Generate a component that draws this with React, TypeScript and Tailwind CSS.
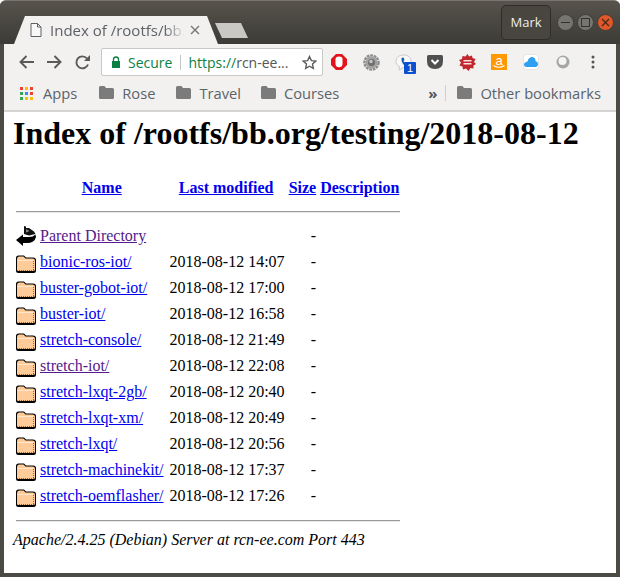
import React from 'react';

const uiFont = "font-['Open_Sans','Noto_Sans',sans-serif]";

const rows = [
  { name: 'bionic-ros-iot/', date: '2018-08-12 14:07' },
  { name: 'buster-gobot-iot/', date: '2018-08-12 17:00' },
  { name: 'buster-iot/', date: '2018-08-12 16:58' },
  { name: 'stretch-console/', date: '2018-08-12 21:49' },
  { name: 'stretch-iot/', date: '2018-08-12 22:08', visited: true },
  { name: 'stretch-lxqt-2gb/', date: '2018-08-12 20:40' },
  { name: 'stretch-lxqt-xm/', date: '2018-08-12 20:49' },
  { name: 'stretch-lxqt/', date: '2018-08-12 20:56' },
  { name: 'stretch-machinekit/', date: '2018-08-12 17:37' },
  { name: 'stretch-oemflasher/', date: '2018-08-12 17:26' },
];

function FolderIcon() {
  return (
    <svg width="20" height="22" viewBox="0 -1 20 22" className="block">
      <path d="M0 6 Q0 3.500 2.500 3.500 H8 L10 5.500 H17 Q20 5.500 20 8 V18.500 Q20 21 17.500 21 H2.500 Q0 21 0 18.500 Z" fill="#000" />
      <path d="M1 7 Q1 4.500 3 4.500 H7.500 L9.500 6.500 H16.500 Q19 6.500 19 8.500 V17.500 Q19 19 17.500 19 H2.500 Q1 19 1 17.500 Z" fill="#ffcc99" />
      <path d="M2 8.500 H17" stroke="#ffe6cc" strokeWidth="1" />
      <path d="M17.500 9 V18" stroke="#8a6a40" strokeWidth="1" strokeDasharray="1 1" />
      <path d="M3 18.500 H18" stroke="#8a6a40" strokeWidth="1" strokeDasharray="1 1" />
    </svg>
  );
}

function BackIcon() {
  return (
    <svg width="20" height="22" viewBox="0 0 20 22" className="block">
      {/* top of the ribbon */}
      <path d="M8 1 L10 1.500 V3 L13 3 L18 6.500 L19.500 9 L13 10.500 L8 9 Z" fill="#111" />
      <path d="M10 4 L13.500 6 L10 7.500 Z" fill="#8a8a8a" />
      {/* arrow */}
      <path d="M0 15 L7 9.500 V12 H13 Q17 12 19.500 9.500 L20 12 Q18.500 18 11 18 H7 V21 Z" fill="#000" />
    </svg>
  );
}

function BookmarkFolder() {
  return (
    <svg width="15" height="13" viewBox="0 0 15 13" className="shrink-0">
      <path d="M0 1.500 Q0 0 1.500 0 H5.500 L7 2 H13.500 Q15 2 15 3.500 V11.500 Q15 13 13.500 13 H1.500 Q0 13 0 11.500 Z" fill="#7b7b7b" />
    </svg>
  );
}

function AppsIcon() {
  const colors = ['#ea4335', '#fbbc05', '#ea4335', '#34a853', '#4285f4', '#ea4335', '#34a853', '#fbbc05', '#fbbc05'];
  return (
    <div className="grid grid-cols-3 gap-[2px] w-[13px] shrink-0">
      {colors.map((c, i) => (
        <svg key={i} width="3" height="3" className="block">
          <rect width="3" height="3" fill={c} />
        </svg>
      ))}
    </div>
  );
}

function Bookmark({ label, className }: { label: string; className: string }) {
  return (
    <div className={`flex items-center gap-2 ${className}`}>
      <BookmarkFolder />
      <span>{label}</span>
    </div>
  );
}

function ExtensionIcons() {
  return (
    <div className="flex items-center h-full">
      <div className="w-8 flex justify-center">
        <svg width="16" height="16" viewBox="0 0 16 16">
          <path d="M5 0 H11 L16 5 V11 L11 16 H5 L0 11 V5 Z" fill="#e2131b" />
          <path d="M4.500 5 Q4.500 2.500 8 2.500 Q11.500 2.500 11.500 5 V10 Q11.500 13 8 13.200 Q4.500 13 4.500 10 Z" fill="#fff" />
        </svg>
      </div>
      <div className="w-8 flex justify-center">
        <svg width="17" height="17" viewBox="0 0 17 17">
          <circle cx="8.500" cy="8.500" r="7" fill="none" stroke="#8c8c8c" strokeWidth="2.500" strokeDasharray="2.700 .8" />
          <circle cx="8.500" cy="8.500" r="6" fill="#a2a2a2" />
          <circle cx="8.500" cy="8.500" r="3.500" fill="#6e6e6e" />
          <circle cx="8" cy="7.500" r="1.800" fill="#c4c4c4" />
        </svg>
      </div>
      <div className="w-8 flex justify-center relative">
        <svg width="17" height="17" viewBox="0 0 17 17">
          <path d="M8.500 1 C13 1 16 3.500 16 7.500 C16 11 13 13.500 8.500 13.500 L4 16 L4.500 12.500 C2 11.500 1 9.500 1 7.500 C1 3.500 4 1 8.500 1 Z" fill="#f8f8f8" stroke="#c9c9c9" />
          <path d="M6.500 4 L8.500 3.500 L9.500 6 L8.500 7 Q9 8.500 10.500 9.500 L11.500 8.500 L14 10 L13 12 Q10 12.500 8 10 Q6 7.500 6.500 4 Z" fill="#1558b0" />
        </svg>
        <span className="absolute left-[17px] top-[8px] w-3 h-3 bg-[#0b50d0] rounded-[1px] text-white text-[11px] leading-3 text-center font-['Liberation_Sans',sans-serif]">
          1
        </span>
      </div>
      <div className="w-8 flex justify-center">
        <svg width="16" height="14" viewBox="0 0 16 14">
          <path d="M0 1.500 Q0 0 1.500 0 H14.500 Q16 0 16 1.500 V6 Q16 14 8 14 Q0 14 0 6 Z" fill="#505050" />
          <path d="M4.500 5 L8 8.500 L11.500 5" fill="none" stroke="#fff" strokeWidth="2" />
        </svg>
      </div>
      <div className="w-8 flex justify-center">
        <svg width="17" height="17" viewBox="0 0 17 17">
          <path d="M8.500 0 L10 2.500 L13 1.500 L13.500 4 L16.500 5 L15 8 L17 10 L14.500 11.500 L14.500 14.500 L11.500 14 L9.500 17 L7 14.500 L4 15.500 L3.500 12.500 L0.500 11.500 L2 8.500 L0 6 L3 5 L3.500 2 L6.500 2.500 Z" fill="#c2272d" />
          <rect x="4.500" y="6" width="8" height="1.500" fill="#fbe3e3" />
          <rect x="4.500" y="9" width="8" height="1.500" fill="#fbe3e3" />
        </svg>
      </div>
      <div className="w-8 flex justify-center">
        <div className="w-4 h-4 bg-[#ff9900] flex items-start justify-center relative">
          <span className="text-white text-[13px] leading-[13px] font-['Liberation_Sans',sans-serif]">a</span>
          <svg width="12" height="4" viewBox="0 0 12 4" className="absolute left-[2px] bottom-[1px]">
            <path d="M0.500 0.500 Q6 4 11.500 0.500" fill="none" stroke="#fff" strokeWidth="1.200" />
          </svg>
        </div>
      </div>
      <div className="w-8 flex justify-center">
        <div className="w-4 h-4 bg-white border border-[#e6e6e6] rounded-[3px] flex items-center justify-center">
          <svg width="14" height="10" viewBox="0 0 14 10">
            <path d="M3 10 Q0 10 0 7.500 Q0 5.500 2 5 Q3 4.500 3.500 4.500 Q4.500 0 8.500 0 Q11.500 0.500 11.500 4 Q14 4.500 14 7 Q14 10 11 10 Z" fill="#2f9ff0" />
          </svg>
        </div>
      </div>
      <div className="w-8 flex justify-center">
        <svg width="14" height="14" viewBox="0 0 14 14">
          <circle cx="7" cy="7" r="6.500" fill="#a6a6a6" />
          <circle cx="6.500" cy="6" r="4" fill="#f4f4f4" />
        </svg>
      </div>
      <div className="w-[28px] flex justify-center">
        <svg width="4" height="14" viewBox="0 0 4 14">
          <circle cx="2" cy="2" r="1.500" fill="#555" />
          <circle cx="2" cy="7" r="1.500" fill="#555" />
          <circle cx="2" cy="12" r="1.500" fill="#555" />
        </svg>
      </div>
    </div>
  );
}

export default function App() {
  return (
    <div className="w-[620px] h-[577px] bg-[#4b4a45] rounded-t-[6px] overflow-hidden flex flex-col px-1 pb-1 border-t border-[#77756e]">
      {/* tab strip */}
      <div className={`-mx-1 h-[43px] shrink-0 bg-gradient-to-b from-[#57534c] to-[#3c3b37] flex items-end pl-[14px] pr-[6px] ${uiFont}`}>
        <div className="w-[204px] h-7 bg-[#f2f1f0] [clip-path:polygon(11px_0,193px_0,204px_100%,0_100%)] flex items-center pl-[16px] text-[#5e6267] text-[15px]">
          <svg width="12" height="14" viewBox="0 0 12 14" className="shrink-0">
            <path d="M1 .5 H7.500 L11 4 V13.500 H1 Z M7.500 .5 V4 H11" fill="#f8f8f8" stroke="#5e6267" />
          </svg>
          <span className="ml-2 w-[135px] whitespace-nowrap [mask-image:linear-gradient(to_right,#000_85%,transparent)]">
            Index of /rootfs/bb.
          </span>
          <svg width="10" height="10" viewBox="0 0 10 10" className="ml-[5px] shrink-0">
            <path d="M1 1 L9 9 M9 1 L1 9" stroke="#777" strokeWidth="1.400" />
          </svg>
        </div>
        <div className="w-[33px] h-[15px] mb-[6px] -ml-[3px] bg-[#c9c8c5] [clip-path:polygon(0_0,26px_0,33px_100%,7px_100%)]" />
        <div className="ml-auto self-start mt-[4px] flex items-center gap-[6px]">
          <div className="w-[50px] h-[35px] border border-[#2e2d2a] rounded-[5px] flex items-center justify-center text-[#eeeeec] text-[13px] bg-[#48463f]">
            Mark
          </div>
          <div className="flex items-center gap-[3px]">
            <div className="w-[17px] h-[17px] rounded-full bg-[#77756f] border border-[#3e3d39] flex items-center justify-center">
              <div className="w-[9px] h-px bg-[#33322e]" />
            </div>
            <div className="w-[17px] h-[17px] rounded-full bg-[#77756f] border border-[#3e3d39] flex items-center justify-center">
              <div className="w-[9px] h-[9px] border border-[#33322e]" />
            </div>
            <div className="w-[17px] h-[17px] rounded-full bg-[#e0572a] border border-[#3e3d39] flex items-center justify-center">
              <svg width="9" height="9" viewBox="0 0 9 9">
                <path d="M1 1 L8 8 M8 1 L1 8" stroke="#4a2a1a" strokeWidth="1.400" />
              </svg>
            </div>
          </div>
        </div>
      </div>

      {/* toolbar */}
      <div className={`h-[34px] shrink-0 bg-[#f2f1f0] flex items-center pl-[15px] pt-[2px] ${uiFont}`}>
        <div className="flex items-center gap-[13px]">
          <svg width="15" height="14" viewBox="0 0 15 14">
            <path d="M15 7 H2 M7.500 1 L1.500 7 L7.500 13" fill="none" stroke="#5a5a5a" strokeWidth="1.900" />
          </svg>
          <svg width="15" height="14" viewBox="0 0 15 14">
            <path d="M0 7 H13 M7.500 1 L13.500 7 L7.500 13" fill="none" stroke="#5a5a5a" strokeWidth="1.900" />
          </svg>
          <svg width="15" height="15" viewBox="0 0 15 15">
            <path d="M13 9.500 A6 6 0 1 1 12 3.500" fill="none" stroke="#5a5a5a" strokeWidth="1.900" />
            <path d="M9 6 H15 V0 Z" fill="#5a5a5a" />
          </svg>
        </div>
        <div className="ml-[11px] w-[222px] h-7 bg-white border border-[#c8c8c8] rounded-[2px] flex items-center pl-[9px] text-[14px] whitespace-nowrap shrink-0">
          <svg width="10" height="12" viewBox="0 0 10 12" className="shrink-0">
            <path d="M2.500 5 V3.500 A2.500 2.500 0 0 1 7.500 3.500 V5" fill="none" stroke="#0b8043" strokeWidth="1.300" />
            <rect x="1" y="5" width="8" height="7" fill="#0b8043" />
          </svg>
          <span className="ml-[7px] text-[#0b8043]">Secure</span>
          <div className="w-px h-[15px] bg-[#c4c4c4] ml-2" />
          <span className="ml-[7px] text-[#0b8043]">https://</span>
          <span className="text-[#555]">rcn-ee...</span>
          <svg width="15" height="15" viewBox="0 0 24 24" className="ml-auto mr-[5px] shrink-0">
            <path d="M12 2.500 L15 9 L22 9.800 L16.800 14.500 L18.200 21.500 L12 18 L5.800 21.500 L7.200 14.500 L2 9.800 L9 9 Z" fill="none" stroke="#5a5a5a" strokeWidth="2.200" />
          </svg>
        </div>
        <ExtensionIcons />
      </div>

      {/* bookmarks bar */}
      <div className={`h-[34px] shrink-0 bg-[#f2f1f0] border-b-2 border-[#d4d4d2] flex items-center pl-[16px] pb-[2px] text-[14.700px] text-[#5b636b] ${uiFont}`}>
        <AppsIcon />
        <span className="ml-[10px]">Apps</span>
        <Bookmark label="Rose" className="ml-[22px]" />
        <Bookmark label="Travel" className="ml-[21px]" />
        <Bookmark label="Courses" className="ml-5" />
        <span className="ml-auto text-[15px] text-[#555] font-bold">»</span>
        <div className="w-px h-4 bg-[#cfcfcf] ml-[8px]" />
        <Bookmark label="Other bookmarks" className="ml-[11px] mr-[15px]" />
      </div>

      {/* page */}
      <div className="flex-1 min-h-0 bg-white overflow-hidden pl-[9px] font-['Liberation_Serif',serif] text-[16px] leading-[18px] text-black">
        <h1 className="mt-[3px] text-[32px] leading-[37px] font-bold">Index of /rootfs/bb.org/testing/2018-08-12</h1>
        <table className="mt-6 border-separate border-spacing-[2px]">
          <tbody>
            <tr>
              <th className="p-px" />
              <th className="p-px pr-[3px] text-center font-bold">
                <a className="text-[#0000ee] underline">Name</a>
              </th>
              <th className="p-px pr-[3px] text-center font-bold">
                <a className="text-[#0000ee] underline">Last modified</a>
              </th>
              <th className="p-px text-center font-bold">
                <a className="text-[#0000ee] underline">Size</a>
              </th>
              <th className="p-px pr-[2px] text-center font-bold">
                <a className="text-[#0000ee] underline">Description</a>
              </th>
            </tr>
            <tr>
              <th colSpan={5} className="p-px">
                <hr className="mt-[10px] mb-2 border-t border-b border-t-[#999] border-b-[#e8e8e8]" />
              </th>
            </tr>
            <tr>
              <td className="p-px align-top"><BackIcon /></td>
              <td className="p-px pr-[3px]">
                <a className="text-[#551a8b] underline">Parent Directory</a>
              </td>
              <td className="p-px" />
              <td className="p-px text-right">-</td>
              <td className="p-px" />
            </tr>
            {rows.map(row => (
              <tr key={row.name}>
                <td className="p-px align-top"><FolderIcon /></td>
                <td className="p-px pr-[3px]">
                  <a className={row.visited ? 'text-[#551a8b] underline' : 'text-[#0000ee] underline'}>{row.name}</a>
                </td>
                <td className="p-px text-right whitespace-nowrap">{row.date}</td>
                <td className="p-px text-right">-</td>
                <td className="p-px" />
              </tr>
            ))}
            <tr>
              <th colSpan={5} className="p-px">
                <hr className="mt-[9px] mb-[3px] border-t border-b border-t-[#999] border-b-[#e8e8e8]" />
              </th>
            </tr>
          </tbody>
        </table>
        <address className="mt-[3px] italic">Apache/2.4.25 (Debian) Server at rcn-ee.com Port 443</address>
      </div>
    </div>
  );
}
